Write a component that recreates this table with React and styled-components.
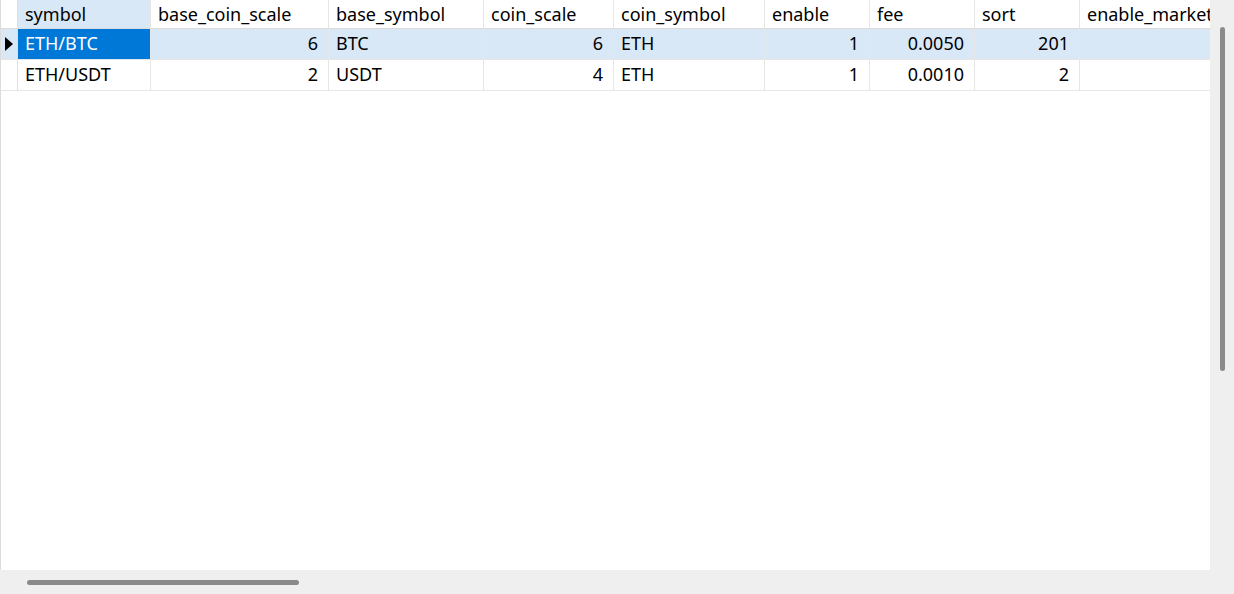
import React from "react";
import styled, { createGlobalStyle } from "styled-components";

const Global = createGlobalStyle`
  html, body { margin: 0; padding: 0; background: #efefef; }
  body { font-family: "Noto Sans", "Noto Sans CJK SC", sans-serif; }
`;

const Frame = styled.div`
  display: grid;
  grid-template-columns: 1210px 24px;
  grid-template-rows: 570px 24px;
  width: 1234px;
  height: 594px;
  background: #efefef;
`;

const Sheet = styled.div`
  background: #ffffff;
  border-left: 1px solid #dcdcdc;
  overflow: hidden;
`;

const COLS = "17px 133px 178px 155px 130px 151px 105px 105px 105px 200px";

const Row = styled.div`
  display: grid;
  grid-template-columns: ${COLS};
  height: ${(p) => (p.$header ? "29px" : "31px")};
  background: ${(p) => (p.$selected ? "#d9e8f7" : "#ffffff")};
`;

const Cell = styled.div`
  box-sizing: border-box;
  display: flex;
  align-items: center;
  justify-content: ${(p) => (p.$num ? "flex-end" : "flex-start")};
  padding: ${(p) => (p.$num ? "0 10px 0 7px" : "0 7px")};
  padding-bottom: ${(p) => (p.$header ? "1px" : "2px")};
  border-right: 1px solid #e6e6e6;
  border-bottom: 1px solid ${(p) => (p.$header ? "#dadada" : "#e6e6e6")};
  font-size: 18px;
  color: ${(p) => (p.$active ? "#ffffff" : "#000000")};
  background: ${(p) => (p.$active ? "#0078d7" : p.$hl ? "#d9e8f7" : "transparent")};
  white-space: nowrap;
  overflow: hidden;
`;

const Indicator = styled.div`
  box-sizing: border-box;
  display: flex;
  align-items: center;
  justify-content: center;
  padding-bottom: 1px;
  border-right: 1px solid #e0e0e0;
  border-bottom: 1px solid ${(p) => (p.$header ? "#dadada" : "#e6e6e6")};
`;

const VTrack = styled.div`
  display: flex;
  justify-content: center;
  padding-top: 27px;
`;

const VThumb = styled.div`
  width: 5px;
  height: 344px;
  border-radius: 3px;
  background: #8a8a8a;
`;

const HTrack = styled.div`
  padding: 10px 0 0 27px;
`;

const HThumb = styled.div`
  width: 272px;
  height: 5px;
  border-radius: 3px;
  background: #8a8a8a;
`;

const Corner = styled.div`
  background: #efefef;
`;

const columns = [
  { key: "symbol", num: false },
  { key: "base_coin_scale", num: true },
  { key: "base_symbol", num: false },
  { key: "coin_scale", num: true },
  { key: "coin_symbol", num: false },
  { key: "enable", num: true },
  { key: "fee", num: true },
  { key: "sort", num: true },
  { key: "enable_market_buy", num: true },
];

const rows = [
  { symbol: "ETH/BTC", base_coin_scale: "6", base_symbol: "BTC", coin_scale: "6", coin_symbol: "ETH", enable: "1", fee: "0.0050", sort: "201", enable_market_buy: "" },
  { symbol: "ETH/USDT", base_coin_scale: "2", base_symbol: "USDT", coin_scale: "4", coin_symbol: "ETH", enable: "1", fee: "0.0010", sort: "2", enable_market_buy: "" },
];

const Arrow = () => (
  <svg width="8" height="14" viewBox="0 0 8 14">
    <path d="M0 0 L8 7 L0 14 Z" fill="#000" />
  </svg>
);

export default function App() {
  return (
    <>
      <Global />
      <Frame>
        <Sheet>
          <Row $header>
            <Indicator $header />
            {columns.map((c, i) => (
              <Cell key={c.key} $header $hl={i === 0}>
                {c.key}
              </Cell>
            ))}
          </Row>
          {rows.map((r, ri) => (
            <Row key={ri} $selected={ri === 0}>
              <Indicator>{ri === 0 && <Arrow />}</Indicator>
              {columns.map((c, ci) => (
                <Cell key={c.key} $num={c.num} $active={ri === 0 && ci === 0}>
                  {r[c.key]}
                </Cell>
              ))}
            </Row>
          ))}
        </Sheet>
        <VTrack>
          <VThumb />
        </VTrack>
        <HTrack>
          <HThumb />
        </HTrack>
        <Corner />
      </Frame>
    </>
  );
}
